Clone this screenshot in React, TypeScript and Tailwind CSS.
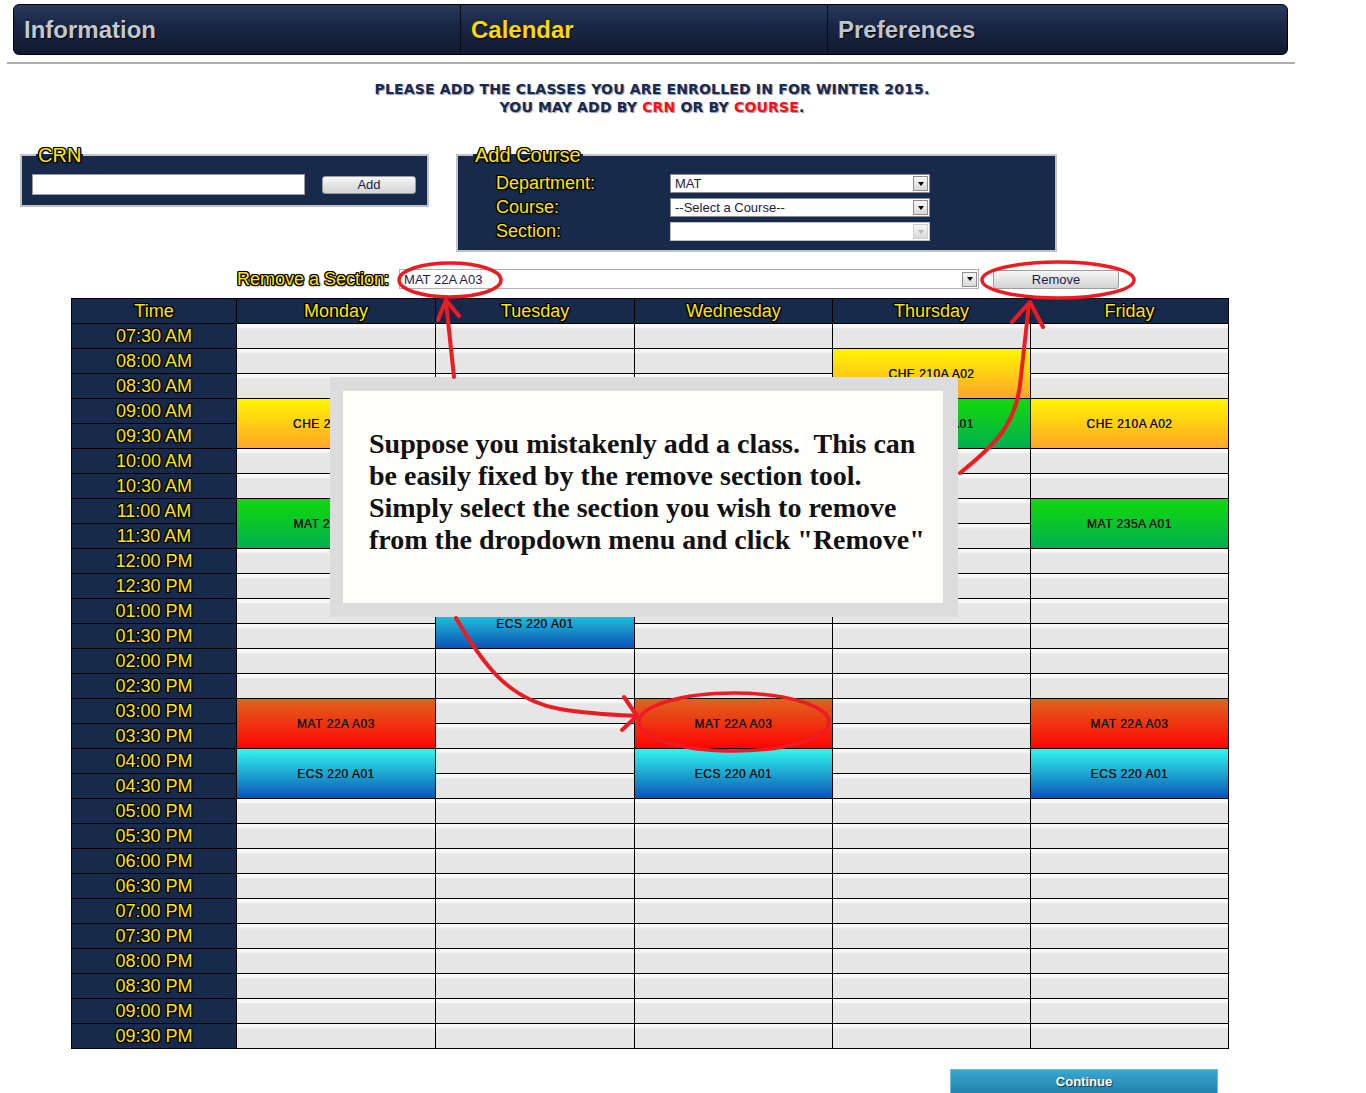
import React from 'react'

type Tone = 'yellow' | 'green' | 'red' | 'blue'

interface Block {
  day: number
  row: number
  label: string
  tone: Tone
}

const OUTLINE =
  '[text-shadow:-1px_-1px_0_#000,1px_-1px_0_#000,-1px_1px_0_#000,1px_1px_0_#000,0_-1px_0_#000,0_1px_0_#000,-1px_0_0_#000,1px_0_0_#000,0_0_2px_#000,1px_1px_2px_#000]'

const TONES: Record<Tone, string> = {
  yellow: 'bg-[linear-gradient(to_bottom,#fff600,#ffa52a)]',
  green: 'bg-[linear-gradient(to_bottom,#13d90b,#00b04e)]',
  red: 'bg-[linear-gradient(to_bottom,#df641f,#ff0400)]',
  blue: 'bg-[linear-gradient(to_bottom,#30f7ec,#0a55b6)]',
}

const DAYS = ['Monday', 'Tuesday', 'Wednesday', 'Thursday', 'Friday']

// 07:30 AM .. 09:30 PM in half hours
const TIMES = Array.from({ length: 29 }, (_, i) => {
  const mins = 7 * 60 + 30 + i * 30
  const h24 = Math.floor(mins / 60)
  const h = h24 > 12 ? h24 - 12 : h24
  const m = mins % 60
  return `${String(h).padStart(2, '0')}:${String(m).padStart(2, '0')} ${h24 >= 12 ? 'PM' : 'AM'}`
})

const BLOCKS: Block[] = [
  { day: 0, row: 3, label: 'CHE 210A A02', tone: 'yellow' },
  { day: 0, row: 7, label: 'MAT 235A A01', tone: 'green' },
  { day: 0, row: 15, label: 'MAT 22A A03', tone: 'red' },
  { day: 0, row: 17, label: 'ECS 220 A01', tone: 'blue' },
  { day: 1, row: 11, label: 'ECS 220 A01', tone: 'blue' },
  { day: 2, row: 15, label: 'MAT 22A A03', tone: 'red' },
  { day: 2, row: 17, label: 'ECS 220 A01', tone: 'blue' },
  { day: 3, row: 1, label: 'CHE 210A A02', tone: 'yellow' },
  { day: 3, row: 3, label: 'MAT 235A A01', tone: 'green' },
  { day: 4, row: 3, label: 'CHE 210A A02', tone: 'yellow' },
  { day: 4, row: 7, label: 'MAT 235A A01', tone: 'green' },
  { day: 4, row: 15, label: 'MAT 22A A03', tone: 'red' },
  { day: 4, row: 17, label: 'ECS 220 A01', tone: 'blue' },
]

function FakeSelect({ value, className, disabled }: { value: string; className: string; disabled?: boolean }) {
  return (
    <div className={`flex items-center border border-[#8c8c8c] bg-white ${className}`}>
      <span className="flex-1 truncate pl-[4px] text-[13px] leading-none text-[#1c1c4a]">{value}</span>
      <span
        className={`mr-[1px] flex h-[15px] w-[15px] items-center justify-center border bg-[linear-gradient(to_bottom,#f7f7f7,#d9d9d9)] ${
          disabled ? 'border-[#d0d0d0]' : 'border-[#8f8f8f]'
        }`}
      >
        <span
          className={`h-0 w-0 border-l-[3px] border-r-[3px] border-t-[4px] border-l-transparent border-r-transparent ${
            disabled ? 'border-t-[#b5b5b5]' : 'border-t-black'
          }`}
        />
      </span>
    </div>
  )
}

function GrayButton({ label, className }: { label: string; className: string }) {
  return (
    <button
      className={`rounded-[3px] border border-[#9c9c9c] bg-[linear-gradient(to_bottom,#f7f7f7,#e4e4e4_50%,#d3d3d3)] text-[13px] leading-none text-[#1c1c4a] ${className}`}
    >
      {label}
    </button>
  )
}

export default function App() {
  return (
    <div className="relative h-[1093px] w-[1366px] overflow-hidden bg-white font-['Liberation_Sans',Arial,sans-serif]">
      {/* top tabs */}
      <nav className="ml-[13px] mt-[4px] flex h-[51px] w-[1275px] overflow-hidden rounded-[6px] border border-black bg-[linear-gradient(to_bottom,#2a3a5e,#1a2746_40%,#111a2f)] text-[24px] font-bold [text-shadow:1px_1px_1px_#000]">
        <div className="flex w-[446px] items-center pl-[10px] text-[#c3c7cf]">Information</div>
        <div className="flex w-[367px] items-center border-l border-[#070c18] pl-[10px] text-[#ffd800]">Calendar</div>
        <div className="flex flex-1 items-center border-l border-[#070c18] pl-[10px] text-[#c0c4cc]">Preferences</div>
      </nav>
      <div className="ml-[7px] mt-[7px] h-[2px] w-[1288px] bg-[#adadad]" />

      <div className="mt-[16px] w-[1304px] text-center font-['DejaVu_Sans',sans-serif] text-[14px] font-bold leading-[18px] tracking-[0.17px] text-[#1b2a4c] [text-shadow:1px_1px_1px_#8a97b0]">
        <div>PLEASE ADD THE CLASSES YOU ARE ENROLLED IN FOR WINTER 2015.</div>
        <div>
          YOU MAY ADD BY <span className="text-[#ff1010]">CRN</span> OR BY <span className="text-[#ff1010]">COURSE</span>.
        </div>
      </div>

      {/* add forms */}
      <div className="mt-[29px] flex items-start">
        <fieldset className="ml-[20px] w-[409px] border-2 border-[#c2c2c2] bg-[#172a4b] px-[10px] pb-[10px] pt-[9px]">
          <legend className={`ml-[4px] px-[2px] text-[20px] leading-[20px] text-[#ffe600] ${OUTLINE}`}>CRN</legend>
          <div className="flex items-center">
            <input className="h-[21px] w-[273px] border border-[#9a9a9a] bg-white outline-none" />
            <GrayButton label="Add" className="ml-[17px] h-[18px] w-[94px]" />
          </div>
        </fieldset>

        <fieldset className="ml-[27px] w-[601px] border-2 border-[#c2c2c2] bg-[#172a4b] pb-[9px] pl-[38px] pt-[9px]">
          <legend className={`-ml-[23px] px-[2px] text-[20px] leading-[20px] text-[#ffe600] ${OUTLINE}`}>Add Course</legend>
          <div className="grid grid-cols-[174px_260px] gap-y-[5px]">
            <div className={`text-[18px] leading-[19px] text-[#ffe600] ${OUTLINE}`}>Department:</div>
            <FakeSelect value="MAT" className="h-[19px]" />
            <div className={`text-[18px] leading-[19px] text-[#ffe600] ${OUTLINE}`}>Course:</div>
            <FakeSelect value="--Select a Course--" className="h-[19px]" />
            <div className={`text-[18px] leading-[19px] text-[#ffe600] ${OUTLINE}`}>Section:</div>
            <FakeSelect value="" className="h-[19px] border-[#bdbdbd]" disabled />
          </div>
        </fieldset>
      </div>

      {/* remove a section */}
      <div className="mt-[16px] flex h-[22px] items-center">
        <span className={`ml-[237px] text-[18px] leading-none text-[#ffe600] ${OUTLINE}`}>Remove a Section:</span>
        <FakeSelect value="MAT 22A A03" className="ml-[10px] h-[20px] w-[580px] border-[#b0b0b0]" />
        <GrayButton label="Remove" className="ml-[14px] h-[19px] w-[126px]" />
      </div>

      {/* weekly calendar */}
      <div className="ml-[71px] mt-[8px] grid w-[1158px] auto-rows-[25px] grid-cols-[165px_199px_199px_198px_198px_198px] border-l border-t border-black">
        <div className={`flex items-center justify-center border-b border-r border-black bg-[#172a4b] text-[18px] text-[#ffe600] ${OUTLINE}`}>
          Time
        </div>
        {DAYS.map((d) => (
          <div
            key={d}
            className={`flex items-center justify-center border-b border-r border-black bg-[#172a4b] text-[18px] text-[#ffe600] ${OUTLINE}`}
          >
            {d}
          </div>
        ))}
        {TIMES.map((t, row) => (
          <React.Fragment key={t}>
            <div className={`flex items-center justify-center border-b border-r border-black bg-[#172a4b] text-[18px] text-[#ffe600] ${OUTLINE}`}>
              {t}
            </div>
            {DAYS.map((_, day) => {
              const b = BLOCKS.find((x) => x.day === day && x.row === row)
              if (b)
                return (
                  <div
                    key={day}
                    className={`row-span-2 flex items-center justify-center border-b border-r border-black text-[12px] tracking-[0.5px] text-[#111] [text-shadow:0_0_0.4px_#111] ${TONES[b.tone]}`}
                  >
                    {b.label}
                  </div>
                )
              if (BLOCKS.some((x) => x.day === day && x.row === row - 1)) return null
              return (
                <div
                  key={day}
                  className="border-b border-r border-black bg-[linear-gradient(to_bottom,#f8f8f8,#f8f8f8_3px,#e6e6e6_5px,#e6e6e6)]"
                />
              )
            })}
          </React.Fragment>
        ))}
      </div>

      <button className="ml-[950px] mt-[20px] flex h-[26px] w-[268px] items-center justify-center border border-[#6cc0de] bg-[linear-gradient(to_bottom,#3ca6ce,#1f82ab)] text-[13px] font-bold text-white [text-shadow:1px_1px_1px_#0b3650]">
        Continue
      </button>

      {/* tutorial callout */}
      <div className="absolute left-[330px] top-[377px] h-[240px] w-[628px] bg-[#dcdcdc] pb-[14px] pl-[13px] pr-[15px] pt-[14px]">
        <div className="h-full w-full bg-[#fefefd] pl-[26px] pt-[37px] font-['Liberation_Serif',serif] text-[28px] font-bold leading-[32px] text-[#111]">
          <div className="whitespace-pre">Suppose you mistakenly add a class.  This can</div>
          <div>be easily fixed by the remove section tool.</div>
          <div>Simply select the section you wish to remove</div>
          <div>from the dropdown menu and click "Remove"</div>
        </div>
      </div>

      {/* red annotations */}
      <svg
        className="pointer-events-none absolute left-0 top-0"
        width="1366"
        height="1093"
        viewBox="0 0 1366 1093"
        fill="none"
        stroke="#ed1c24"
        strokeWidth="3.5"
        strokeLinecap="round"
        strokeLinejoin="round"
      >
        <ellipse cx="450" cy="280" rx="51" ry="17" />
        <ellipse cx="1058" cy="280" rx="76" ry="18" />
        <ellipse cx="734" cy="722" rx="95" ry="29" />
        <path d="M454 377 L446 302" strokeWidth="4" />
        <path d="M438 320 L446 300 L459 316" strokeWidth="4" />
        <path d="M960 473 C995 445 1015 425 1020 385 L1029 304" strokeWidth="4" />
        <path d="M1012 322 L1030 302 L1043 327" strokeWidth="4" />
        <path d="M456 618 C485 668 510 700 560 709 C590 714 615 715 636 716" strokeWidth="4" />
        <path d="M624 697 L637 716 L622 730" strokeWidth="4" />
      </svg>
    </div>
  )
}
